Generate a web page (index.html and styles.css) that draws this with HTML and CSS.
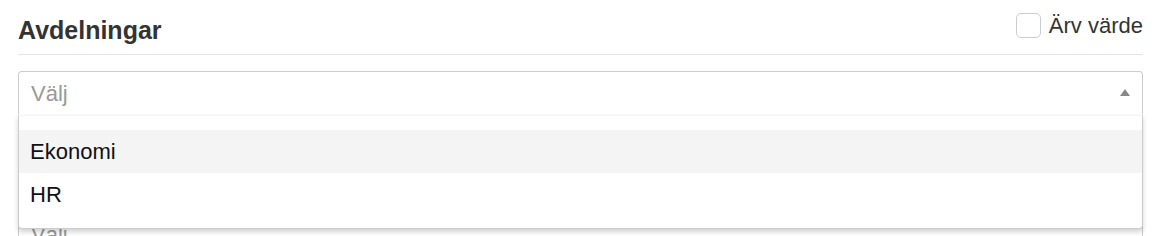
FILE: index.html
```html
<!DOCTYPE html>
<html lang="sv">
<head>
    <meta charset="UTF-8">
    <title>Avdelningar</title>
    <link rel="stylesheet" href="styles.css">
</head>
<body>
    <div class="panel">
        <div class="panel-head">
            <h2>Avdelningar</h2>
            <label class="inherit"><span class="box"></span>Ärv värde</label>
        </div>
        <div class="field">
            <div class="select open">
                <span class="placeholder">Välj</span>
                <span class="arrow"></span>
            </div>
            <ul class="menu">
                <li class="active">Ekonomi</li>
                <li>HR</li>
            </ul>
        </div>
        <div class="field next">
            <div class="select">
                <span class="placeholder">Välj</span>
            </div>
        </div>
    </div>
</body>
</html>
```

FILE: styles.css
```css
body { margin: 0; background: #fff; font-family: "Liberation Sans", Arial, sans-serif; color: #333; }
.panel { width: 1125px; padding: 0 13px 20px 18px; }
.panel-head { display: flex; justify-content: space-between; align-items: center; height: 54px; border-bottom: 1px solid #e6e6e6; }
.panel-head h2 { margin: 0; font-size: 25px; font-weight: bold; color: #333; padding-top: 6px; }
.inherit { display: flex; align-items: center; gap: 8px; font-size: 22px; color: #333; margin-top: -3px; }
.inherit .box { width: 23px; height: 23px; border: 1px solid #ccc; border-radius: 5px; }

.field { position: relative; margin-top: 16px; }
.field.next { margin-top: 97px; }
.select { display: flex; align-items: center; justify-content: space-between; height: 44px; box-sizing: border-box;
          padding: 2px 12px 0 12px; border: 1px solid #ccc; border-radius: 4px; font-size: 22px; }
.select.open { border-bottom-color: transparent; border-radius: 4px 4px 0 0; }
.placeholder { color: #999; }
.arrow { width: 0; height: 0; border-left: 5px solid transparent; border-right: 5px solid transparent; border-bottom: 7px solid #888; margin-bottom: 4px; }

.menu { position: absolute; top: 44px; left: 0; right: 0; z-index: 2; margin: 0; padding: 14px 0 12px; list-style: none;
        background: #fff; border: 1px solid #ccc; border-top-color: #f4f4f4; border-radius: 0 0 4px 4px;
        box-shadow: 0 3px 5px rgba(0, 0, 0, 0.18); }
.menu li { height: 43px; line-height: 43px; padding-left: 11px; font-size: 22px; color: #111; }
.menu li.active { background: #f4f4f4; }
```
